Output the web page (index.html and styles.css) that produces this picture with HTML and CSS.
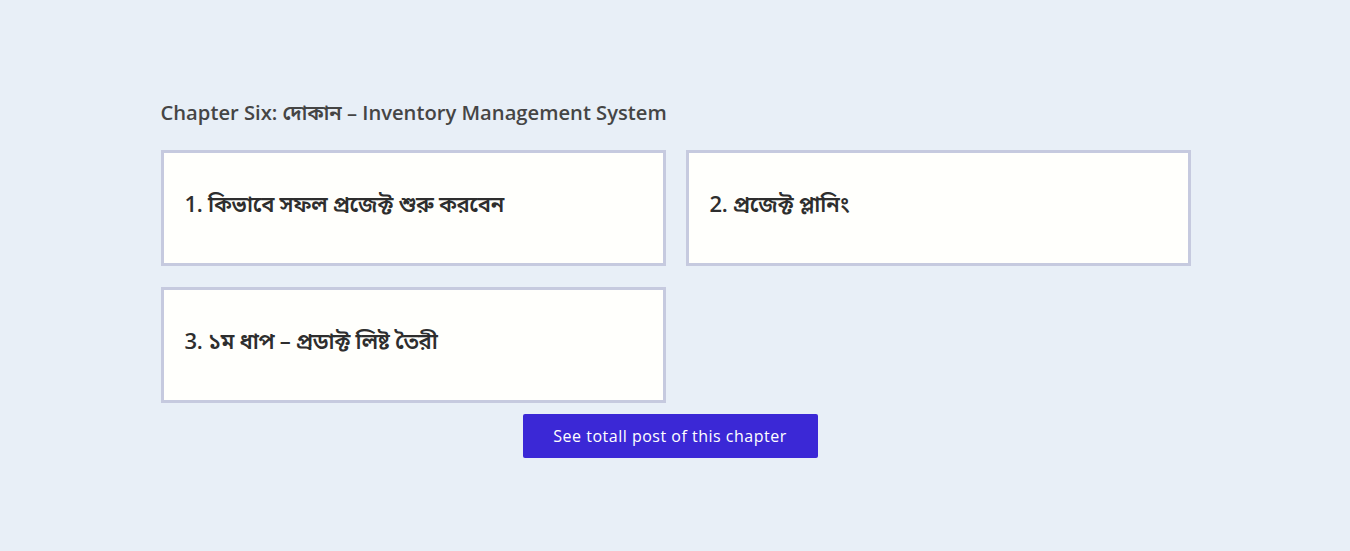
FILE: index.html
```html
<!DOCTYPE html>
<html lang="bn">
<head>
<meta charset="utf-8">
<title>Chapter Six</title>
<link rel="stylesheet" href="styles.css">
</head>
<body>
<main class="page">
  <section class="chapter">
    <h2 class="chapter-title">Chapter Six: দোকান – Inventory Management System</h2>
    <div class="post-grid">
      <a class="post-card" href="#"><h3 class="post-title">1. কিভাবে সফল প্রজেক্ট শুরু করবেন</h3></a>
      <a class="post-card" href="#"><h3 class="post-title">2. প্রজেক্ট প্লানিং</h3></a>
      <a class="post-card" href="#"><h3 class="post-title">3. ১ম ধাপ – প্রডাক্ট লিষ্ট তৈরী</h3></a>
    </div>
    <div class="actions">
      <a class="btn" href="#">See totall post of this chapter</a>
    </div>
  </section>
</main>
</body>
</html>
```

FILE: styles.css
```css
html, body {
  margin: 0;
  padding: 0;
}
body {
  background: #e8eff7;
  font-family: "Open Sans", "Noto Sans Bengali", "Noto Sans", sans-serif;
  color: #3d3d3d;
  height: 551px;
}
.page {
  padding-top: 97px;
  display: flex;
  justify-content: center;
}
.chapter {
  width: 1029px;
}
.chapter-title {
  margin: 0 0 23px 0;
  font-size: 20.2px;
  line-height: 30px;
  font-weight: 600;
  color: #454545;
}
.post-grid {
  display: grid;
  grid-template-columns: 505px 505px;
  column-gap: 20px;
  row-gap: 21px;
}
.post-card {
  display: flex;
  align-items: center;
  height: 116px;
  box-sizing: border-box;
  background: #fffffc;
  border: 3px solid #c6cadf;
  padding: 0 21px 10px 21px;
  text-decoration: none;
}
.post-title {
  margin: 0;
  font-size: 22px;
  line-height: 30px;
  font-weight: 600;
  color: #2e2e2e;
  letter-spacing: -0.3px;
}
.actions {
  display: flex;
  justify-content: center;
  margin-top: 11px;
  padding-right: 10px;
}
.btn {
  display: inline-flex;
  align-items: center;
  justify-content: center;
  width: 295px;
  height: 44px;
  background: #3b28d6;
  color: #ffffff;
  border-radius: 2px;
  font-size: 16px;
  letter-spacing: 0.5px;
  text-decoration: none;
}
```
